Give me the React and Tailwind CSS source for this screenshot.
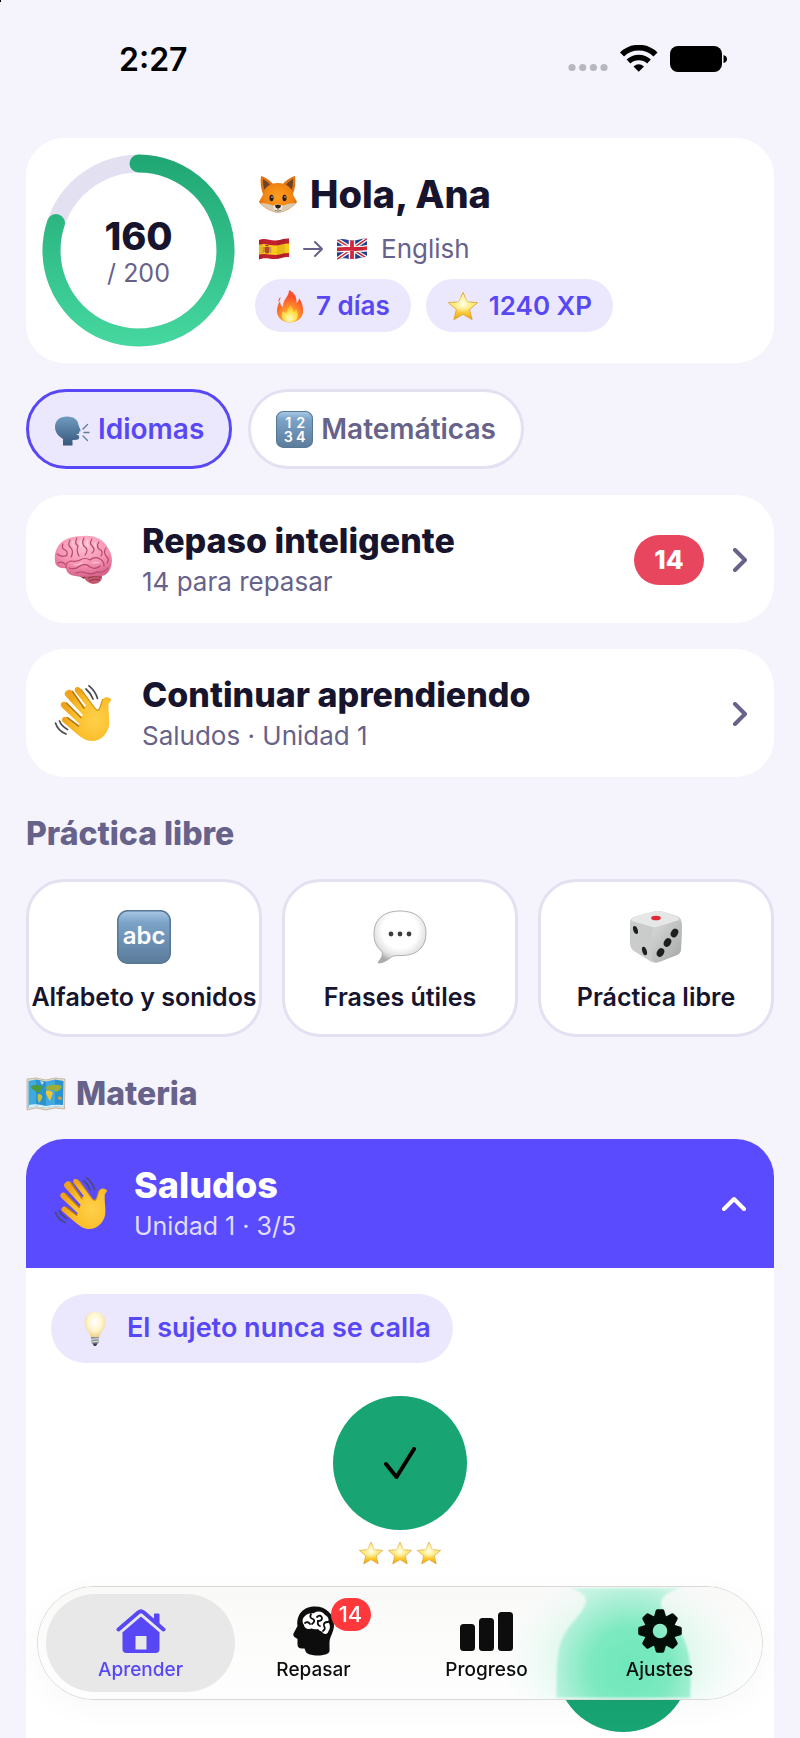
import { useState } from 'react';

function Fox() {
  return (
    <svg viewBox="0 0 40 38" className="h-[38px] w-10 shrink-0" aria-hidden="true">
      <defs>
        <radialGradient id="foxFace" cx="50%" cy="45%" r="60%">
          <stop offset="0" stopColor="#ffa01f" />
          <stop offset="0.7" stopColor="#f08110" />
          <stop offset="1" stopColor="#cf5f0b" />
        </radialGradient>
      </defs>
      <path d="M3 1 C7 2 13 6 15 9 L25 9 C27 6 33 2 37 1 C38 7 37 14 35 19 L5 19 C3 14 2 7 3 1Z" fill="#df7212" />
      <path d="M5 4 C8 6 11 8 12 10 L7 16 C5 12 5 8 5 4Z M35 4 C32 6 29 8 28 10 L33 16 C35 12 35 8 35 4Z" fill="#6b4427" />
      <path d="M20 8 C29 8 34 13 35 19 C35.500 22 38 24 39 27 C35 33 26 37 20 38 C14 37 5 33 1 27 C2 24 4.500 22 5 19 C6 13 11 8 20 8Z" fill="url(#foxFace)" />
      <path d="M2 28 C7 28 12 29 16 31 L20 33 L24 31 C28 29 33 28 38 28 C34 33 26 37 20 38 C14 37 6 33 2 28Z" fill="#d9c9b0" />
      <path d="M15 31 C17 29 23 29 25 31 C24 35 22 37 20 37 C18 37 16 35 15 31Z" fill="#efe6d6" />
      <ellipse cx="13.500" cy="23" rx="2" ry="3.200" fill="#241a14" />
      <ellipse cx="26.500" cy="23" rx="2" ry="3.200" fill="#241a14" />
      <circle cx="14" cy="22" r="0.700" fill="#fff" />
      <circle cx="27" cy="22" r="0.700" fill="#fff" />
      <path d="M17 30.500 C18 29.500 22 29.500 23 30.500 C23 32.500 21.500 33.500 20 33.500 C18.500 33.500 17 32.500 17 30.500Z" fill="#2a211d" />
      <path d="M20 33 V35 M17 35.500 Q20 36.500 23 35.500" stroke="#6a5a4a" strokeWidth="0.800" fill="none" />
    </svg>
  );
}

function FlagSpain() {
  return (
    <svg viewBox="0 0 32 24" className="h-6 w-8" aria-label="Español" role="img">
      <defs>
        <clipPath id="esWave">
          <path d="M1 3 C7 0.500 11 3.500 17 3.500 C22 3.500 26 1 31 1.500 V20 C26 19.500 22 22 17 22 C11 22 7 20 1 22.500Z" />
        </clipPath>
      </defs>
      <g clipPath="url(#esWave)">
        <rect width="32" height="24" fill="#c2202c" />
        <path d="M0 8 C7 5.500 11 8.500 17 8.500 C22 8.500 26 6 32 6.500 V16 C26 15.500 22 18 17 18 C11 18 7 16 0 18Z" fill="#fac91b" />
        <path d="M6.500 10 h5 v4 q0 2.500 -2.500 2.500 q-2.500 0 -2.500 -2.500Z" fill="#b5482a" />
        <path d="M5.300 10 v6 M12.800 10 v6" stroke="#a08b6a" strokeWidth="1" />
        <path d="M7.500 8.500 h3" stroke="#9c3a22" strokeWidth="1.500" />
        <path d="M0 0 H5 V24 H0Z M19 0 H27 V24 H19Z" fill="#000" opacity="0.080" />
      </g>
    </svg>
  );
}

function FlagUk() {
  return (
    <svg viewBox="0 0 32 24" className="h-6 w-8" aria-label="Inglés" role="img">
      <defs>
        <clipPath id="ukWave">
          <path d="M1 3 C7 0.500 11 3.500 17 3.500 C22 3.500 26 1 31 1.500 V20 C26 19.500 22 22 17 22 C11 22 7 20 1 22.500Z" />
        </clipPath>
      </defs>
      <g clipPath="url(#ukWave)">
        <rect width="32" height="24" fill="#27408f" />
        <path d="M0 2 L32 22 M32 1 L0 23" stroke="#fff" strokeWidth="4" />
        <path d="M0 2 L32 22 M32 1 L0 23" stroke="#d3283b" strokeWidth="1.400" />
        <path d="M16 0 V24 M0 12.500 C9 10.500 20 13.500 32 11" stroke="#fff" strokeWidth="6.500" fill="none" />
        <path d="M16 0 V24 M0 12.500 C9 10.500 20 13.500 32 11" stroke="#d3283b" strokeWidth="3.800" fill="none" />
        <path d="M0 0 H5 V24 H0Z M19 0 H27 V24 H19Z" fill="#000" opacity="0.080" />
      </g>
    </svg>
  );
}

function Fire() {
  return (
    <svg viewBox="0 0 28 34" className="h-[34px] w-7" aria-hidden="true">
      <defs>
        <radialGradient id="fireOuter" cx="50%" cy="88%" r="85%">
          <stop offset="0" stopColor="#ffd23c" />
          <stop offset="0.450" stopColor="#ff8a2a" />
          <stop offset="0.800" stopColor="#fb4f2c" />
          <stop offset="1" stopColor="#f5552f" />
        </radialGradient>
        <radialGradient id="fireInner" cx="50%" cy="80%" r="70%">
          <stop offset="0" stopColor="#fffbc0" />
          <stop offset="0.600" stopColor="#ffe14a" />
          <stop offset="1" stopColor="#ffb52e" />
        </radialGradient>
      </defs>
      <path d="M13 1 C19 4 21 9 20.500 14 C22 13 23 11 23 9 C26 13 27.500 18 27 23 C26.500 29 21 33.500 14 33.500 C7 33.500 1.500 29 1 23 C0.700 19 2 15 4 12 C4 15 5 17 7 18 C7 14 8 12 10 9 C12 6 13 4 13 1Z" fill="url(#fireOuter)" />
      <path d="M4.500 8 C3 9 2.300 11 2.300 13 C3.500 11.500 4.500 10.500 4.500 8Z" fill="#f5552f" />
      <path d="M14 16 C17 19 17 21 18 23 C19 22 19.500 21 20 20 C22 23 22.500 26 21.500 28.500 C20 32 17 33 14 33 C10 33 7 31.500 6 28.500 C5.300 26 6 23.500 7.500 21.500 C8 23 9 24 10.500 24 C10.500 21 13 19.500 14 16Z" fill="url(#fireInner)" />
    </svg>
  );
}

function Star({ className }) {
  return (
    <svg viewBox="0 0 34 32" className={className} aria-hidden="true">
      <defs>
        <linearGradient id="starFill" x1="0" y1="0" x2="0" y2="1">
          <stop offset="0" stopColor="#fff6b0" />
          <stop offset="0.550" stopColor="#ffe877" />
          <stop offset="0.780" stopColor="#fcc52c" />
          <stop offset="1" stopColor="#e99c0c" />
        </linearGradient>
        <radialGradient id="starGlow">
          <stop offset="0" stopColor="#fffff0" />
          <stop offset="1" stopColor="#fffbc8" stopOpacity="0" />
        </radialGradient>
      </defs>
      <path
        d="M17 1.500 L21.300 11.500 L32.500 12.500 L24 19.800 L26.700 30.500 L17 24.800 L7.300 30.500 L10 19.800 L1.500 12.500 L12.700 11.500Z"
        fill="url(#starFill)"
        stroke="#dda73a"
        strokeWidth="1"
        strokeLinejoin="round"
      />
      <circle cx="17" cy="14" r="9" fill="url(#starGlow)" />
    </svg>
  );
}

function SpeakingHead() {
  return (
    <svg viewBox="0 0 36 30" className="mt-1 h-[30px] w-9" aria-hidden="true">
      <defs>
        <linearGradient id="headFill" x1="0" y1="0" x2="0" y2="1">
          <stop offset="0" stopColor="#6f9bc0" />
          <stop offset="1" stopColor="#37587a" />
        </linearGradient>
      </defs>
      <path d="M13 0.500 C20 0.500 24 4 24.500 9 L26.500 14 C27 15 26 15.600 25 15.800 L25.300 17.500 L22 18.500 L25 19.500 C25.500 22 25 23.500 23 23.700 L18.500 24 V29.500 H9 V23 C4 20 1 16 1 11 C1 4.500 6 0.500 13 0.500Z" fill="url(#headFill)" />
      <path d="M29 13 L33.500 8.500 M30 16.500 H35 M29 20 L33.500 24.500" stroke="#5d7b99" strokeWidth="1.300" strokeLinecap="round" />
    </svg>
  );
}

function BlueKey({ children, className }) {
  return (
    <svg viewBox="0 0 54 54" className={className} aria-hidden="true">
      <defs>
        <linearGradient id="keyFill" x1="0" y1="0" x2="0" y2="1">
          <stop offset="0" stopColor="#a9c9e6" />
          <stop offset="0.220" stopColor="#7ca3c8" />
          <stop offset="0.600" stopColor="#6a8fb1" />
          <stop offset="1" stopColor="#5d7c9b" />
        </linearGradient>
      </defs>
      <rect x="0.750" y="0.750" width="52.500" height="52.500" rx="10" fill="url(#keyFill)" stroke="#587795" strokeWidth="1.500" />
      {children}
    </svg>
  );
}

function Brain() {
  return (
    <svg viewBox="0 0 58 50" className="h-[50px] w-[58px]" aria-hidden="true">
      <defs>
        <radialGradient id="brainFill" cx="50%" cy="25%" r="75%">
          <stop offset="0" stopColor="#ffc0d2" />
          <stop offset="0.600" stopColor="#f792b2" />
          <stop offset="1" stopColor="#d8648c" />
        </radialGradient>
      </defs>
      <path d="M31 38 C36 37 44 36 48 40 C49 46 44 49 39 49 C34 48 31 45 29 41Z" fill="#c4586c" />
      <path d="M34 43 Q41 40 47 42 M35 46 Q41 43 46 45" stroke="#8f3349" strokeWidth="0.900" fill="none" />
      <path d="M22 39 L30 44 L33 40Z" fill="#7d3b46" />
      <path d="M30 1 C41 0 50 5 54 13 C59 20 59 30 55 36 C52 41 46 42 40 41 C33 41 29 43 22 41 C16 41 12 37 12 33 C6 34 1 31 1 26 C0 20 2 11 9 6 C15 2 22 1 30 1Z" fill="url(#brainFill)" />
      <g fill="none" stroke="#b34a6d" strokeWidth="1.200" strokeLinecap="round">
        <path d="M3 19 Q8 23 13 20 M9 9 Q7 13 11 15 Q15 17 12 21 M16 5 Q13 10 17 13 Q20 17 17 22" />
        <path d="M23 3 Q20 8 24 11 Q22 16 25 21 M30 3 Q27 9 31 12 Q35 15 31 20 M38 4 Q35 8 38 11 Q42 15 38 18" />
        <path d="M45 7 Q42 11 45 14 Q50 16 47 21 M52 13 Q49 17 52 21 Q56 24 53 28" />
        <path d="M12 33 Q11 27 17 26 Q22 27 26 25 Q31 22 36 25 Q41 21 46 24 Q50 26 50 31" />
        <path d="M4 28 Q8 26 11 29 M15 33 Q21 35 26 31 Q32 28 36 32 Q42 35 46 31 M22 38 Q28 36 32 38 Q38 40 43 37 Q50 38 54 33" />
      </g>
      <g fill="none" stroke="#ffdbe5" strokeWidth="1.200" strokeLinecap="round" opacity="0.800">
        <path d="M19 6 Q18 9 20 12 M27 6 Q25 8 27 11 M34 5 Q32 8 34 11 M41 8 Q40 10 42 12 M20 30 Q25 30 28 28 M39 28 Q43 27 45 28" />
      </g>
    </svg>
  );
}

function Wave({ className, lines }) {
  return (
    <svg viewBox="0 0 58 57" className={className} aria-hidden="true">
      <defs>
        <radialGradient id="handFill" cx="68%" cy="60%" r="62%">
          <stop offset="0" stopColor="#ffd04a" />
          <stop offset="0.650" stopColor="#fbbf2c" />
          <stop offset="1" stopColor="#efa41c" />
        </radialGradient>
      </defs>
      <path
        d="M13 5.500 C15 4 17 4.500 18.500 6.500 L30 22 L32 20.500 L21.500 7 C20 4.800 20.500 3 22 2.400 C24 1.500 25.500 2.300 27 4.300 L40 22 C42 25 44 26 45.500 23.500 C47 21 47 17 49 14 C51 11.500 55 11.800 57 14.500 C57.500 15.500 54.500 17.500 54.500 20 C54 27 56 34 55 41 C53 50 46 56 38 56 C32 56 28 53 23 49 L9.500 37.500 C7.800 36 7.500 34.500 8.500 33 C10 31.300 12 31.500 13.500 32.700 L24 41 L25.500 39 L8 22.500 C6.500 21 6.300 19 7.500 17.800 C9 16.300 11 16.500 12.500 18 L27 32 L28.800 30 L11.500 11 C9.900 9 11 6.800 13 5.500Z"
        fill="url(#handFill)"
      />
      <path d="M18.500 6.500 L30 23 M12.500 18 L27 32.500 M13.500 32.700 L24.500 41" stroke="#b9770f" strokeWidth="1.600" strokeLinecap="round" fill="none" />
      <path d="M27 4.300 L40 22 C42 25.500 44.500 26 45.500 23.500 C47 21 47 17 49 14" stroke="#d18f16" strokeWidth="1.200" fill="none" />
      <path d="M35 0.800 C39 4 42 8 43.500 13.500 M32 4 C35 6.500 37.500 10 39 14 M5.500 36 C7 40 10 42.500 13.500 44.500 M1.500 38 C3 43 7 47 12 49" stroke={lines} strokeWidth="1.700" strokeLinecap="round" fill="none" />
    </svg>
  );
}

function SpeechBubble() {
  return (
    <svg viewBox="0 0 54 54" className="size-[54px]" aria-hidden="true">
      <defs>
        <radialGradient id="bubbleFill" cx="50%" cy="38%" r="62%">
          <stop offset="0.550" stopColor="#ffffff" />
          <stop offset="0.800" stopColor="#e3e3e3" />
          <stop offset="1" stopColor="#a9a9a9" />
        </radialGradient>
      </defs>
      <path d="M27 1 C43 1 53 9 53 23 C53 37 44 45.500 29 45.500 C25 45.500 21 45.500 19 46.500 C15 50 10 53 6 53 C4.500 53 5 52 6 51 C8.500 48 10 45 9 41.500 C3 37 1 31 1 23.500 C1 9 11 1 27 1Z" fill="url(#bubbleFill)" stroke="#a9a9a9" strokeWidth="0.900" />
      <circle cx="18" cy="24" r="2.400" fill="#3c3c3c" />
      <circle cx="27" cy="24" r="2.400" fill="#3c3c3c" />
      <circle cx="36" cy="24" r="2.400" fill="#3c3c3c" />
    </svg>
  );
}

function Dice() {
  return (
    <svg viewBox="0 0 54 54" className="size-[54px]" aria-hidden="true">
      <defs>
        <linearGradient id="diceRight" x1="0" y1="0" x2="1" y2="1">
          <stop offset="0" stopColor="#d9dbda" />
          <stop offset="1" stopColor="#a3a7a5" />
        </linearGradient>
      </defs>
      <path d="M23 2 Q28 0.500 33 1.500 L48 6 Q53 8 53 14 L52 39 Q52 43 48 45 L30 52 Q25 54 21 51 L5 41 Q1 38 1 33 V13 Q1 8 6 6.500Z" fill="#c9cccb" />
      <path d="M23 2 Q28 0.500 33 1.500 L49 7 Q51 9 48 11 L28 17 Q25 18 22 16.500 L3 11 Q2 8 6 6.500Z" fill="#e6e7e7" />
      <path d="M23 24 Q23 18 29 17 L47 11 Q53 10 53 16 L52 39 Q52 43 48 45 L30 52 Q23 54 22.500 47Z" fill="url(#diceRight)" />
      <ellipse cx="27" cy="8" rx="4.800" ry="2.300" fill="#e02735" />
      <g fill="#1d1f1f">
        <ellipse cx="6.500" cy="20" rx="2.200" ry="4.200" transform="rotate(-18 6.500 20)" />
        <ellipse cx="15.500" cy="41" rx="2.200" ry="4.400" transform="rotate(-18 15.500 41)" />
        <ellipse cx="45.500" cy="23" rx="3.500" ry="4.500" transform="rotate(30 45.500 23)" />
        <ellipse cx="38.500" cy="32.500" rx="3.500" ry="4.500" transform="rotate(30 38.500 32.500)" />
        <ellipse cx="31.500" cy="42.500" rx="3.500" ry="4.500" transform="rotate(30 31.500 42.500)" />
      </g>
    </svg>
  );
}

function WorldMap() {
  return (
    <svg viewBox="0 0 40 34" className="h-[34px] w-10" aria-hidden="true">
      <path d="M1 2 L10 1 L20 3 L29 1 L39 2 L38.500 32 L29 31 L20 33 L10 31 L1 33Z" fill="#e4dcc8" stroke="#b4a88c" strokeWidth="0.700" />
      <path d="M2.500 4 L10 2.500 V29.500 L2.500 31Z M20 4.500 L29 2.500 V29.500 L20 31Z" fill="#3fa9e0" />
      <path d="M10 2.500 L20 4.500 V31 L10 29.500Z M29 2.500 L37.500 4 L37 30 L29 29.500Z" fill="#2b93cf" />
      <path d="M5 9 C9 7 14 8 17 10 C16 13 13 14 12 16 L9 14 C7 12 5 12 5 9Z" fill="#4f9a3c" />
      <path d="M12 17 C15 17 17 19 16 21 C15 23 14 25 13 26 C12 23 11 20 12 17Z" fill="#c9c037" />
      <path d="M19 11 C23 7 31 7 36 9 C35 13 32 14 30 15 L27 13 L22 13Z" fill="#9cae38" />
      <path d="M20 14 C23 13 26 14 27 16 C26 19 25 21 24 24 C22 22 22 19 20 17Z" fill="#ecc637" />
      <path d="M14 4 L18 5 L16 8Z" fill="#cfdce4" />
      <path d="M32 20 C34 19 36 20 36 22 C34 24 32 23 32 20Z" fill="#d89c3b" />
      <path d="M3 28 Q10 26 20 29 Q30 27 37 28 L37 30 L29 29.500 L20 31 L10 29.500 L3 31Z" fill="#d5eefa" />
    </svg>
  );
}

function Bulb() {
  return (
    <svg viewBox="0 0 24 36" className="h-9 w-6" aria-hidden="true">
      <defs>
        <radialGradient id="bulbFill" cx="50%" cy="38%" r="60%">
          <stop offset="0" stopColor="#ffffff" />
          <stop offset="0.550" stopColor="#fff6cf" />
          <stop offset="1" stopColor="#eed086" />
        </radialGradient>
      </defs>
      <path d="M12 1 C18.500 1 22.500 6 22.500 11.500 C22.500 18 17 21 16 27 H8 C7 21 1.500 18 1.500 11.500 C1.500 6 5.500 1 12 1Z" fill="url(#bulbFill)" />
      <path d="M8 26 H16 L15.500 32 Q12 35 8.500 32Z" fill="#8f9399" />
      <path d="M8 28.500 L16 27.500 M8.500 31 L15.500 30" stroke="#dcdfe2" strokeWidth="1" />
      <path d="M9.500 32.500 H14.500 L13 35 H11Z" fill="#3c4046" />
    </svg>
  );
}

function HomeIcon() {
  return (
    <svg viewBox="0 0 50 44" className="h-11 w-[50px]" aria-hidden="true">
      <path d="M38.500 4.500 H42.500 Q43.500 4.500 43.500 5.500 V16 L38 11.500 V5.500 Q38 4.500 38.500 4.500Z" fill="#5747f5" />
      <path d="M2.500 20.500 L22.500 3.200 Q25 1.200 27.500 3.200 L47.500 20.500" stroke="#5747f5" strokeWidth="4" strokeLinecap="round" fill="none" />
      <path d="M6.500 22.500 L24 7.500 Q25 6.800 26 7.500 L43.500 22.500 V40 Q43.500 44 39.500 44 H10.500 Q6.500 44 6.500 40Z M19.500 27 V40.500 H30.500 V27Z" fill="#5747f5" fillRule="evenodd" />
      <path d="M6 22.500 L25 6.300 L44 22.500" stroke="#e8e8e8" strokeWidth="2" fill="none" />
    </svg>
  );
}

function HeadBrainIcon() {
  return (
    <svg viewBox="0 0 42 50" className="h-[50px] w-[42px]" aria-hidden="true">
      <path d="M22 0.500 C33 0.500 41 8 41 19 C41 26 37 30 36.500 36 V45 C36.500 48 30 49.500 25 49.500 C19 49.500 13 48 12.500 45 L11.500 42.500 C7 43 4.500 42 4.500 38 V33 L1.500 31 C0 30 0 28 1 26.500 L4.500 20 C3 8 11 0.500 22 0.500Z" fill="#0d0d0d" />
      <path d="M12 10 C15 6.500 19 7.500 21 7 C25 4.500 30 5.500 32 9 C36 11 36 14 35 16 C38 19 37 23 35.500 25 C35 28 32 29 30 27 C29 25 26 25 25 23 C21 24 19 22 18 22.500 C15 24 11 22 11 19 C9 17 9 12 12 10Z" fill="#fff" />
      <path d="M18 8 Q16 12 20 13 Q23 15 19 18 M12 17 Q15 15 17 18 M24 11 Q28 8 29 12 Q29 15 25 15 Q24 19 27 20 M35 16 Q30 16 31 20 Q33 23 30 25" stroke="#0d0d0d" strokeWidth="1.800" strokeLinecap="round" fill="none" />
    </svg>
  );
}

function BarsIcon() {
  return (
    <svg viewBox="0 0 53 39" className="h-[39px] w-[53px]" aria-hidden="true">
      <rect x="0" y="12" width="15" height="27" rx="3.500" fill="#0d0d0d" />
      <rect x="19" y="6" width="15" height="33" rx="3.500" fill="#0d0d0d" />
      <rect x="38" y="0" width="15" height="39" rx="3.500" fill="#0d0d0d" />
    </svg>
  );
}

function GearIcon() {
  const angles = [0, 45, 90, 135, 180, 225, 270, 315];
  return (
    <svg viewBox="-22 -22 44 44" className="size-11" aria-hidden="true">
      {angles.map((a) => (
        <path key={a} d="M-6.500 -13 L-4.200 -20.500 Q-3.800 -21.800 -2.500 -21.800 H2.500 Q3.800 -21.800 4.200 -20.500 L6.500 -13Z" fill="#020d08" transform={`rotate(${a})`} />
      ))}
      <circle r="11.500" fill="none" stroke="#020d08" strokeWidth="8.500" />
    </svg>
  );
}

function Chevron({ up, className }) {
  return (
    <svg viewBox="0 0 24 24" className={className} fill="none" stroke="currentColor" strokeWidth="4" strokeLinecap="round" strokeLinejoin="round" aria-hidden="true">
      {up ? <path d="M2 17 L12 7 L22 17" /> : <path d="M7 2 L17 12 L7 22" />}
    </svg>
  );
}

function StatusBar() {
  return (
    <div className="flex h-[138px] items-start justify-between pt-[41px] pr-[72px] pl-[119px]">
      <span className="text-[32px] leading-[38px] font-semibold text-black">2:27</span>
      <svg viewBox="0 0 160 28" className="mt-1 h-7 w-40" aria-hidden="true">
        <g fill="#b7b7bf">
          <circle cx="4" cy="22.500" r="3.600" />
          <circle cx="14.700" cy="22.500" r="3.600" />
          <circle cx="25.400" cy="22.500" r="3.600" />
          <circle cx="36" cy="22.500" r="3.600" />
        </g>
        <g fill="none" stroke="#000">
          <path d="M54 9.500 A24 24 0 0 1 87.500 9.500" strokeWidth="5.800" />
          <path d="M60.500 16.500 A15 15 0 0 1 81 16.500" strokeWidth="5.400" />
        </g>
        <path d="M65.500 21.500 Q70.750 17 76 21.500 L70.750 26.800Z" fill="#000" />
        <rect x="102" y="1" width="52" height="26" rx="8" fill="#000" />
        <path d="M155.500 10 Q159 11 159 14 Q159 17 155.500 18Z" fill="#000" />
      </svg>
    </div>
  );
}

function ProgressRing({ value, total }) {
  const r = 87;
  const length = 2 * Math.PI * r;
  return (
    <div className="relative size-[193px] shrink-0">
      <svg viewBox="0 0 193 193" className="size-full" aria-hidden="true">
        <defs>
          <linearGradient id="ringFill" x1="0" y1="0" x2="0" y2="1">
            <stop offset="0" stopColor="#1fa673" />
            <stop offset="1" stopColor="#46d8a0" />
          </linearGradient>
          <mask id="ringArc">
            <circle
              cx="96.500"
              cy="96.500"
              r={r}
              fill="none"
              stroke="#fff"
              strokeWidth="18"
              strokeLinecap="round"
              strokeDasharray={`${(length * value) / total} ${length}`}
              transform="rotate(-90 96.500 96.500)"
            />
          </mask>
        </defs>
        <circle cx="96.500" cy="96.500" r={r} fill="none" stroke="#e3e0f2" strokeWidth="18" />
        <rect width="193" height="193" fill="url(#ringFill)" mask="url(#ringArc)" />
      </svg>
      <div className="absolute inset-0 flex flex-col items-center justify-center pt-[6px]">
        <span className="text-[38px] leading-[38px] font-extrabold text-[#17142e]">{value}</span>
        <span className="text-[25px] leading-[36px] text-[#67628a]">/ {total}</span>
      </div>
    </div>
  );
}

function ActionCard({ icon, title, subtitle, badge }) {
  return (
    <button className="flex w-full items-center rounded-[38px] bg-white pt-[22px] pr-[22px] pb-[21px] pl-7 text-left">
      {icon}
      <span className="ml-[30px] flex-1 pt-[3px]">
        <span className="block text-[34px] leading-[42px] font-extrabold text-[#17142e]">{title}</span>
        <span className="block text-[26px] leading-10 text-[#67628a]">{subtitle}</span>
      </span>
      {badge && (
        <span className="mr-6 flex h-[50px] w-[70px] items-center justify-center rounded-full bg-[#e8465f] text-[26px] font-extrabold text-white">
          {badge}
        </span>
      )}
      <Chevron className="size-6 text-[#67628a]" />
    </button>
  );
}

function PracticeCard({ icon, label }) {
  return (
    <button className="flex h-[158px] flex-col items-center rounded-[38px] border-3 border-[#e3e0f2] bg-white pt-7">
      {icon}
      <span className="mt-4 text-[25px] leading-[34px] font-semibold whitespace-nowrap text-[#17142e]">{label}</span>
    </button>
  );
}

// Light bending through the glass of the tab bar
function GlassTint() {
  return (
    <svg viewBox="0 0 726 114" className="absolute inset-0 size-full" preserveAspectRatio="xMaxYMid slice" aria-hidden="true">
      <defs>
        <linearGradient id="glassBase" x1="0" y1="0" x2="0" y2="1">
          <stop offset="0" stopColor="#f9f9f8" />
          <stop offset="0.500" stopColor="#fcfcfb" />
          <stop offset="1" stopColor="#fefefe" />
        </linearGradient>
        <radialGradient id="glassGlow">
          <stop offset="0" stopColor="#7fe8c0" stopOpacity="0.700" />
          <stop offset="0.550" stopColor="#a8f0d5" stopOpacity="0.280" />
          <stop offset="1" stopColor="#d8f8ec" stopOpacity="0" />
        </radialGradient>
        <radialGradient id="glassGreen" gradientUnits="userSpaceOnUse" cx="594" cy="82" r="88">
          <stop offset="0" stopColor="#6ee7ba" />
          <stop offset="0.450" stopColor="#7ce9c0" />
          <stop offset="1" stopColor="#c9f4e4" />
        </radialGradient>
        <filter id="soften" x="-10%" y="-10%" width="120%" height="120%">
          <feGaussianBlur stdDeviation="0.900" />
        </filter>
      </defs>
      <rect width="726" height="114" fill="url(#glassBase)" />
      <ellipse cx="590" cy="74" rx="130" ry="92" fill="url(#glassGlow)" />
      <path
        d="M533 2 C548 6 552 12 548 20 C544 30 532 38 525 54 C520 66 520 90 520 112 H654 C655 90 655 70 648 54 C642 38 628 30 625 20 C623 12 632 4 646 2Z"
        fill="url(#glassGreen)"
        filter="url(#soften)"
      />
    </svg>
  );
}

const tabs = [
  { id: 'aprender', label: 'Aprender', icon: <HomeIcon /> },
  { id: 'repasar', label: 'Repasar', icon: <HeadBrainIcon />, badge: 14 },
  { id: 'progreso', label: 'Progreso', icon: <BarsIcon /> },
  { id: 'ajustes', label: 'Ajustes', icon: <GearIcon /> },
];

function TabBar({ active, onChange }) {
  return (
    <nav className="fixed inset-x-[37px] bottom-[38px] flex h-[114px] overflow-hidden rounded-full border border-[#d9d9d9] bg-[#fcfcfc] px-4 shadow-[0_8px_30px_rgba(0,0,0,0.03)]">
      <GlassTint />
      {tabs.map((tab) => (
        <button key={tab.id} onClick={() => onChange(tab.id)} className="relative flex flex-1 flex-col items-center pt-[19px]">
          {active === tab.id && <span className="absolute -inset-x-2 inset-y-[7px] rounded-full bg-[#e8e8e8]" />}
          <span className="relative flex h-[50px] items-center justify-center">
            {tab.icon}
            {tab.badge && (
              <span className="absolute -top-2 left-[38px] flex h-[33px] w-10 items-center justify-center rounded-full bg-[#ff383c] text-[22px] font-medium text-white">
                {tab.badge}
              </span>
            )}
          </span>
          <span className={active === tab.id ? 'relative text-[19px] leading-7 font-medium text-[#5747f5]' : 'relative text-[19px] leading-7 font-medium text-[#0d0d0d]'}>
            {tab.label}
          </span>
        </button>
      ))}
    </nav>
  );
}

function App() {
  const [tab, setTab] = useState('aprender');
  const [subject, setSubject] = useState('idiomas');
  const [open, setOpen] = useState(true);

  const chip = 'flex h-20 items-center gap-2 rounded-full border-3 px-[25px] text-[28px] font-semibold';
  const chipOn = 'border-[#5747f5] bg-[#ebe7fd] text-[#5747f5]';
  const chipOff = 'border-[#e3e0f2] bg-white text-[#67628a]';

  return (
    <div className="relative flex min-h-screen flex-col bg-[#f5f4fc] font-[family-name:Inter,sans-serif]">
      <span className="absolute top-0 left-0 h-[2px] w-px bg-black" />
      <StatusBar />

      <main className="flex flex-1 flex-col px-[26px]">
        <section className="flex items-center gap-5 rounded-[38px] bg-white p-4">
          <ProgressRing value={160} total={200} />
          <div>
            <h1 className="flex items-center gap-3 pl-[3px] text-[38px] leading-[50px] font-extrabold text-[#17142e]">
              <Fox />
              Hola, Ana
            </h1>
            <p className="mt-3 flex items-center gap-[13px] pl-[3px] text-[26px] leading-9 text-[#67628a]">
              <FlagSpain />
              <svg viewBox="0 0 20 18" className="h-[18px] w-5" fill="none" stroke="currentColor" strokeWidth="2" strokeLinecap="round" strokeLinejoin="round" aria-hidden="true">
                <path d="M1 9 H19 M12 2 L19 9 L12 16" />
              </svg>
              <FlagUk />
              English
            </p>
            <div className="mt-3 flex gap-[15px] text-[26px] font-semibold text-[#5747f5]">
              <span className="flex h-[53px] items-center gap-3 rounded-full bg-[#ebe7fd] px-[21px]">
                <Fire />7 días
              </span>
              <span className="flex h-[53px] items-center gap-[10px] rounded-full bg-[#ebe7fd] px-[21px]">
                <Star className="h-8 w-8" />
                1240 XP
              </span>
            </div>
          </div>
        </section>

        <div className="mt-[26px] flex gap-4">
          <button onClick={() => setSubject('idiomas')} className={`${chip} ${subject === 'idiomas' ? chipOn : chipOff}`}>
            <SpeakingHead />
            Idiomas
          </button>
          <button onClick={() => setSubject('mates')} className={`${chip} ${subject === 'mates' ? chipOn : chipOff}`}>
            <BlueKey className="size-[37px]">
              <g fill="#fff" fontSize="21" fontWeight="600" textAnchor="middle">
                <text x="18" y="25">1</text>
                <text x="36" y="25">2</text>
                <text x="18" y="45">3</text>
                <text x="36" y="45">4</text>
              </g>
            </BlueKey>
            Matemáticas
          </button>
        </div>

        <div className="mt-[26px] flex flex-col gap-[26px]">
          <ActionCard icon={<Brain />} title="Repaso inteligente" subtitle="14 para repasar" badge={14} />
          <ActionCard icon={<Wave className="h-[57px] w-[58px]" lines="#4a4a52" />} title="Continuar aprendiendo" subtitle="Saludos · Unidad 1" />
        </div>

        <h2 className="mt-[38px] mb-[26px] text-[32px] leading-[38px] font-extrabold text-[#67628a]">Práctica libre</h2>
        <div className="grid grid-cols-3 gap-5">
          <PracticeCard
            icon={
              <BlueKey className="size-[54px]">
                <text x="27" y="34" fill="#fff" fontSize="24" fontWeight="600" textAnchor="middle">abc</text>
              </BlueKey>
            }
            label="Alfabeto y sonidos"
          />
          <PracticeCard icon={<SpeechBubble />} label="Frases útiles" />
          <PracticeCard icon={<Dice />} label="Práctica libre" />
        </div>

        <h2 className="mt-[38px] mb-[26px] flex items-center gap-[10px] text-[32px] leading-[38px] font-extrabold text-[#67628a]">
          <WorldMap />
          Materia
        </h2>
        <section className="flex flex-1 flex-col overflow-hidden rounded-t-[38px] bg-white">
          <button onClick={() => setOpen(!open)} className="flex items-center bg-[#5a4bff] py-[22px] pr-7 pl-7 text-left text-white">
            <Wave className="h-[53px] w-[54px]" lines="#4a4a6a" />
            <span className="ml-[26px] flex-1 pt-[3px]">
              <span className="block text-[36px] leading-[42px] font-extrabold">Saludos</span>
              <span className="block text-[25px] leading-10 text-[#e0ddff]">Unidad 1 · 3/5</span>
            </span>
            <Chevron up className="size-6" />
          </button>
          {open && (
            <div className="flex flex-col px-[25px] pt-[26px]">
              <button className="flex h-[69px] items-center gap-5 self-start rounded-full bg-[#ebe7fd] pr-[22px] pl-8 text-[27px] font-semibold text-[#5747f5]">
                <Bulb />
                El sujeto nunca se calla
              </button>
              <div className="mt-[33px] flex flex-col items-center">
                <button className="flex size-[134px] items-center justify-center rounded-full bg-[#18a573]" aria-label="Lección 1 completada">
                  <svg viewBox="0 0 32 32" className="size-8" fill="none" stroke="#000" strokeWidth="4" strokeLinecap="round" strokeLinejoin="round" aria-hidden="true">
                    <path d="M2 17 L12.500 30 L30 2" />
                  </svg>
                </button>
                <div className="mt-[11px] flex gap-[3px]">
                  <Star className="h-6 w-[26px]" />
                  <Star className="h-6 w-[26px]" />
                  <Star className="h-6 w-[26px]" />
                </div>
              </div>
              <div className="mt-[33px] flex flex-col items-center pl-[64%]">
                <button className="size-[134px] rounded-full bg-[#18a573]" aria-label="Lección 2 completada" />
              </div>
            </div>
          )}
        </section>
      </main>

      <TabBar active={tab} onChange={setTab} />
    </div>
  );
}

export default App;
